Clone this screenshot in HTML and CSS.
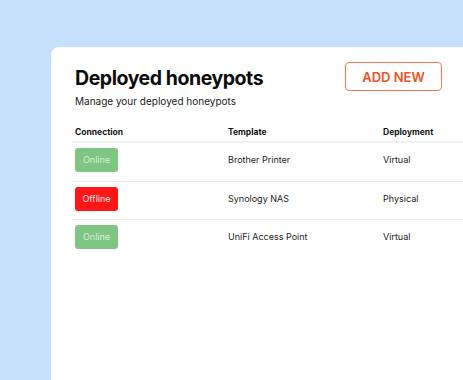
FILE: index.html
```html
<!DOCTYPE html>
<html>
<head>
<meta charset="utf-8">
<link rel="stylesheet" href="styles.css">
</head>
<body>
<div class="page">
  <div class="card">
    <div class="head">
      <div class="titles">
        <h1 class="title">Deployed honeypots</h1>
        <p class="subtitle">Manage your deployed honeypots</p>
      </div>
      <button class="add">ADD NEW</button>
    </div>
    <table class="list">
      <thead>
        <tr>
          <th class="c1">Connection</th>
          <th class="c2">Template</th>
          <th class="c3">Deployment</th>
        </tr>
      </thead>
      <tbody>
        <tr>
          <td class="c1"><span class="badge on">Online</span></td>
          <td class="c2">Brother Printer</td>
          <td class="c3">Virtual</td>
        </tr>
        <tr>
          <td class="c1"><span class="badge off">Offline</span></td>
          <td class="c2">Synology NAS</td>
          <td class="c3">Physical</td>
        </tr>
        <tr>
          <td class="c1"><span class="badge on">Online</span></td>
          <td class="c2">UniFi Access Point</td>
          <td class="c3">Virtual</td>
        </tr>
      </tbody>
    </table>
  </div>
</div>
</body>
</html>
```
FILE: styles.css
```css
html, body {
  margin: 0;
  padding: 0;
  height: 100%;
  overflow: hidden;
}
body {
  background: #c6e0fc;
  font-family: Inter, "Noto Sans", sans-serif;
  color: #111;
}
.page {
  padding: 47px 0 0 51px;
  height: 100%;
  box-sizing: border-box;
}
.card {
  background: #fff;
  border-top-left-radius: 8px;
  width: 412px;
  height: 333px;
  padding: 15px 0 0 21px;
  box-sizing: border-box;
  overflow: hidden;
}
.head {
  display: flex;
  align-items: flex-start;
  padding-left: 3px;
  width: 367px;
  justify-content: space-between;
}
.title {
  margin: 2px 0 0;
  font-size: 19.5px;
  line-height: 28px;
  font-weight: 700;
  letter-spacing: -0.45px;
  color: #0c0c0c;
}
.subtitle {
  margin: 3px 0 0;
  font-size: 10px;
  line-height: 13px;
  color: #222;
}
.add {
  margin-top: 0;
  width: 97px;
  height: 29px;
  border: 1.5px solid #ef7a55;
  border-radius: 4px;
  background: #fff;
  color: #ee5326;
  font-family: Inter, sans-serif;
  font-weight: 600;
  font-size: 13px;
  padding: 0;
}
.list {
  margin-top: 17px;
  border-collapse: collapse;
  width: 400px;
  font-size: 9px;
}
.list th {
  text-align: left;
  font-weight: 700;
  font-size: 8.5px;
  padding: 2px 3px 3px;
  line-height: 11px;
  border-bottom: 2px solid #f1f1f1;
  color: #111;
}
.list td {
  padding: 5px 3px 8.5px;
  line-height: 24px;
  border-bottom: 1px solid #ececec;
  color: #222;
}
.list tbody tr:last-child td {
  border-bottom: none;
}
.c1 { width: 147px; }
.c2 { width: 149px; }
.badge {
  display: inline-flex;
  align-items: center;
  justify-content: center;
  width: 43px;
  height: 24px;
  border-radius: 3px;
  font-size: 9px;
  vertical-align: top;
}
.on {
  background: #7fc583;
  color: #d9efd9;
}
.off {
  background: #ff1616;
  color: #ffe4e4;
}
```
